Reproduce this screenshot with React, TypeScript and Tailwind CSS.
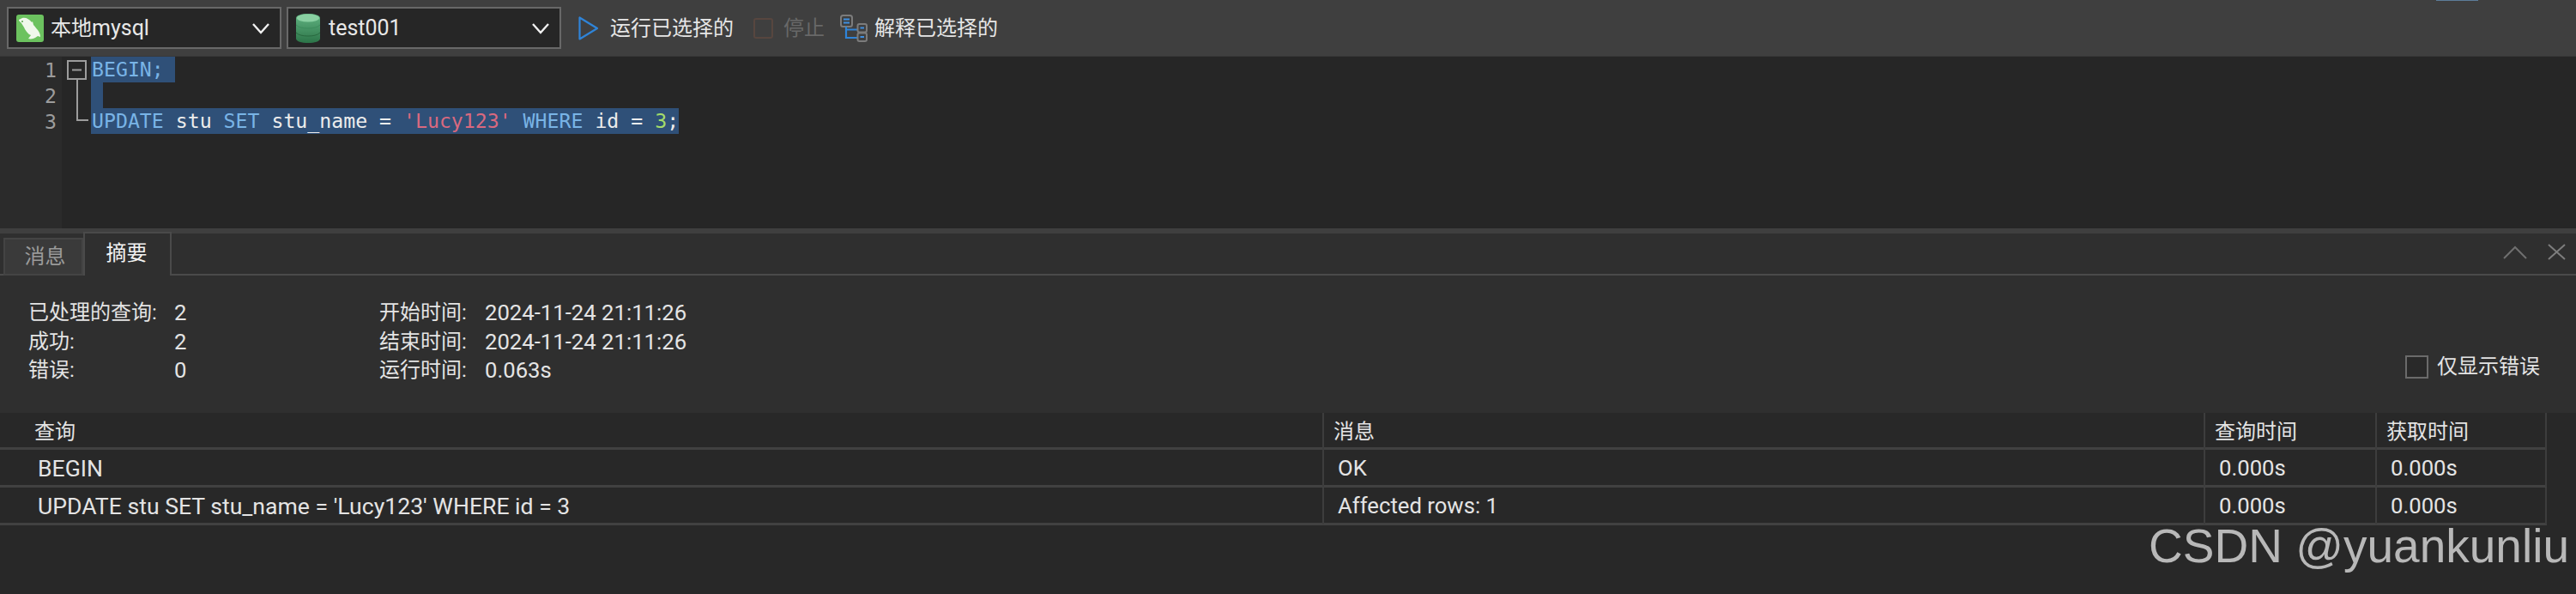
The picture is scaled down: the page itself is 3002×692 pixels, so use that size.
import React from 'react';

const ui = "font-['Roboto','Noto_Sans_CJK_SC',sans-serif]";

const DolphinIcon = () => (
  <svg width="32" height="32" viewBox="0 0 32 32" className="shrink-0">
    <rect width="32" height="32" rx="3" fill="#6cc25f" />
    <path
      d="M3 6l4-2c4-1 8 1 11 5l1-1 1 4c2 2 3 4 5 6 2 3 3 5 3 8l-3-1-3 2c-2 1-5 2-8 1l3-4c-3-1-5-4-7-7-1-3-3-5-4-7L3 7z"
      fill="#f0f8ec"
    />
    <circle cx="7" cy="8" r="1" fill="#5aa54f" />
  </svg>
);

const DbIcon = () => (
  <svg width="28" height="34" viewBox="0 0 28 34" className="shrink-0">
    <defs>
      <linearGradient id="dbFill" x1="0" y1="0" x2="0" y2="1">
        <stop offset="0" stopColor="#62b583" />
        <stop offset="1" stopColor="#2c7448" />
      </linearGradient>
    </defs>
    <path d="M0 5c0-3 6-5 14-5s14 2 14 5v24c0 3-6 5-14 5S0 32 0 29z" fill="url(#dbFill)" />
    <ellipse cx="14" cy="5" rx="13" ry="4.5" fill="#8ad0a2" />
    <path d="M0 13c3 3 8 4 14 4s11-1 14-4" fill="none" stroke="#3c8c5c" strokeWidth="1" />
    <path d="M0 22c3 3 8 4 14 4s11-1 14-4" fill="none" stroke="#28693f" strokeWidth="1" />
  </svg>
);

const Chevron = () => (
  <svg width="20" height="14" viewBox="0 0 20 14" fill="none" stroke="#f0f0f0" strokeWidth="2.4" className="shrink-0">
    <path d="M1 2l9 10 9-10" />
  </svg>
);

const PlayIcon = () => (
  <svg width="24" height="28" viewBox="0 0 24 28" fill="none" stroke="#2f84d8" strokeWidth="2.2" className="shrink-0">
    <path d="M1.5 1.5v25L22 14z" strokeLinejoin="round" />
  </svg>
);

const ExplainIcon = () => (
  <svg width="32" height="32" viewBox="0 0 32 32" fill="none" className="shrink-0">
    <rect x="1" y="1" width="13" height="13" rx="2.5" stroke="#7c7c7c" strokeWidth="2" />
    <path d="M4 5.5h7M4 9.5h7" stroke="#3f8fe0" strokeWidth="2" />
    <path d="M7 14v13h13M7 17.5h13" stroke="#2f84d8" strokeWidth="2.2" />
    <rect x="20.5" y="11" width="10.5" height="9.5" rx="2" stroke="#7c7c7c" strokeWidth="2" />
    <rect x="20.5" y="21.5" width="10.5" height="9.5" rx="2" stroke="#7c7c7c" strokeWidth="2" />
    <path d="M23.5 15.5h4.5M23.5 26h4.5" stroke="#3f8fe0" strokeWidth="2" />
  </svg>
);

const Select = ({ icon, children, gap }: { icon: React.ReactNode; children: React.ReactNode; gap: string }) => (
  <div className={`flex h-[49px] w-[320px] items-center border-2 border-[#686868] bg-[#262626] pr-[12px] pl-[9px] ${gap}`}>
    {icon}
    <span className="flex-1 text-[24px] text-[#e8e8e8]">{children}</span>
    <Chevron />
  </div>
);

const Toolbar = () => (
  <div className={`relative flex h-[66px] items-center border-b border-[#383838] bg-[#3f3f3f] pl-[8px] ${ui}`}>
    <Select icon={<DolphinIcon />} gap="gap-[8px]">
      本地<span className="text-[25px]">mysql</span>
    </Select>
    <div className="ml-[6px]">
      <Select icon={<DbIcon />} gap="gap-[10px]">
        <span className="text-[25px]">test001</span>
      </Select>
    </div>
    <div className="ml-[20px] flex items-center gap-[13px] text-[24px] text-[#e6e6e6]">
      <PlayIcon />
      <span>运行已选择的</span>
    </div>
    <div className="ml-[23px] flex items-center gap-[12px] text-[24px] text-[#686868]">
      <div className="h-[24px] w-[23px] rounded-[3px] border-2 border-[#57463f]" />
      <span>停止</span>
    </div>
    <div className="ml-[18px] flex items-center gap-[8px] text-[24px] text-[#e6e6e6]">
      <ExplainIcon />
      <span>解释已选择的</span>
    </div>
    <div className="absolute top-0 left-[2839px] h-[1px] w-[49px] bg-[#5d7d99]" />
  </div>
);

const Token = ({ c, children }: { c: string; children: React.ReactNode }) => <span className={c}>{children}</span>;

const Editor = () => (
  <div className="flex h-[200px] bg-[#262626] font-['DejaVu_Sans_Mono',monospace] text-[23.2px] leading-[30px]">
    <div className="w-[72px] shrink-0 bg-[#2b2b2b] pt-[1px] pr-[6px] text-right text-[#9c9c9c]">
      <div>1</div>
      <div>2</div>
      <div>3</div>
    </div>
    <div className="relative flex-1 pl-[34px]">
      <svg width="32" height="80" viewBox="0 0 32 80" fill="none" stroke="#9c9c9c" strokeWidth="2" className="absolute top-[4px] left-[6px]">
        <rect x="1" y="1" width="21" height="21" />
        <path d="M6 11.5h11" />
        <path d="M12 22v48h13" />
      </svg>
      <div className="h-[30px] w-[98px] bg-[#2f5078] pl-[1px] text-[#79b4e6]">BEGIN;</div>
      <div className="h-[30px] w-[14px] bg-[#2f5078]" />
      <div className="h-[30px] w-[685px] bg-[#2f5078] pl-[1px] whitespace-pre text-[#ececec]">
        <Token c="text-[#79b4e6]">UPDATE</Token> stu <Token c="text-[#79b4e6]">SET</Token> stu_name = <Token c="text-[#d9697f]">'Lucy123'</Token>{' '}
        <Token c="text-[#79b4e6]">WHERE</Token> id = <Token c="text-[#a4dc6a]">3</Token>;
      </div>
    </div>
  </div>
);

const Tabs = () => (
  <div className="relative flex h-[49px] items-end border-b-2 border-[#4a4a4a] bg-[#2f2f2f] pl-[4px] text-[24px]">
    <div className="mb-[-2px] flex h-[44px] w-[93px] items-center justify-center border-2 border-b-2 border-[#444] bg-[#3a3a3a] pl-[4px] text-[#9a9a9a]">消息</div>
    <div className="mb-[-2px] flex h-[51px] w-[103px] items-center justify-center border-x-2 border-t-2 border-[#4a4a4a] bg-[#2f2f2f] pr-[2px] pb-[4px] text-[#f2f2f2]">摘要</div>
    <div className="ml-auto flex items-center gap-[24px] pr-[12px] pb-[16px]">
      <svg width="28" height="16" viewBox="0 0 28 16" fill="none" stroke="#6f6f6f" strokeWidth="2">
        <path d="M1 15L14 2l13 13" />
      </svg>
      <svg width="21" height="19" viewBox="0 0 21 19" fill="none" stroke="#7d7d7d" strokeWidth="2">
        <path d="M1 1l19 17M20 1L1 18" />
      </svg>
    </div>
  </div>
);

const summary = [
  ['已处理的查询:', '2', '开始时间:', '2024-11-24 21:11:26'],
  ['成功:', '2', '结束时间:', '2024-11-24 21:11:26'],
  ['错误:', '0', '运行时间:', '0.063s'],
];

const Summary = () => (
  <div className="flex h-[160px] items-start bg-[#2f2f2f] pt-[27px] pl-[33px] text-[24px] leading-[33.5px] text-[#e4e4e4]">
    <div className="grid grid-cols-[170px_239px_123px_auto]">
      {summary.map((row) =>
        row.map((cell, i) => (
          <div key={row[0] + i} className="even:text-[25.7px]">
            {cell}
          </div>
        )),
      )}
    </div>
    <label className="mt-[63px] ml-auto flex items-center gap-[10px] pr-[42px]">
      <span className="h-[27px] w-[27px] border-2 border-[#6a6a6a] bg-[#292929]" />
      <span className="text-[24px]">仅显示错误</span>
    </label>
  </div>
);

const rows = [
  ['BEGIN', 'OK', '0.000s', '0.000s'],
  ["UPDATE stu SET stu_name = 'Lucy123' WHERE id = 3", 'Affected rows: 1', '0.000s', '0.000s'],
];

const cols = 'grid grid-cols-[1541px_1027px_200px_200px] w-[2968px]';

const ResultTable = () => (
  <div className="flex-1 bg-[#282828] text-[#e4e4e4]">
    <div className={`${cols} h-[43px] border-b-[3px] border-[#414141] text-[24px]`}>
      <div className="pl-[40px] leading-[44px]">查询</div>
      {['消息', '查询时间', '获取时间'].map((h) => (
        <div key={h} className="border-l-2 border-[#3d3d3d] pl-[11px] leading-[44px] last:border-r-2">{h}</div>
      ))}
    </div>
    {rows.map((row) => (
      <div key={row[0]} className={`${cols} h-[44px] border-b-[3px] border-[#414141] text-[25.7px]`}>
        <div className="pl-[44px] text-[26.6px] leading-[43px]">{row[0]}</div>
        {row.slice(1).map((cell, i) => (
          <div key={i} className="border-l-2 border-[#3d3d3d] pl-[16px] leading-[43px] last:border-r-2">{cell}</div>
        ))}
      </div>
    ))}
  </div>
);

export default function App() {
  return (
    <div className={`relative flex h-[692px] w-[3002px] flex-col overflow-hidden bg-[#282828] ${ui}`}>
      <Toolbar />
      <Editor />
      <div className="h-[6px] bg-[#3f3f3f]" />
      <Tabs />
      <Summary />
      <ResultTable />
      <div className="absolute top-[604px] right-[8px] font-['Liberation_Sans',sans-serif] text-[55px] leading-[64px] whitespace-nowrap text-[#b8b8b8]">
        CSDN @yuankunliu
      </div>
    </div>
  );
}
